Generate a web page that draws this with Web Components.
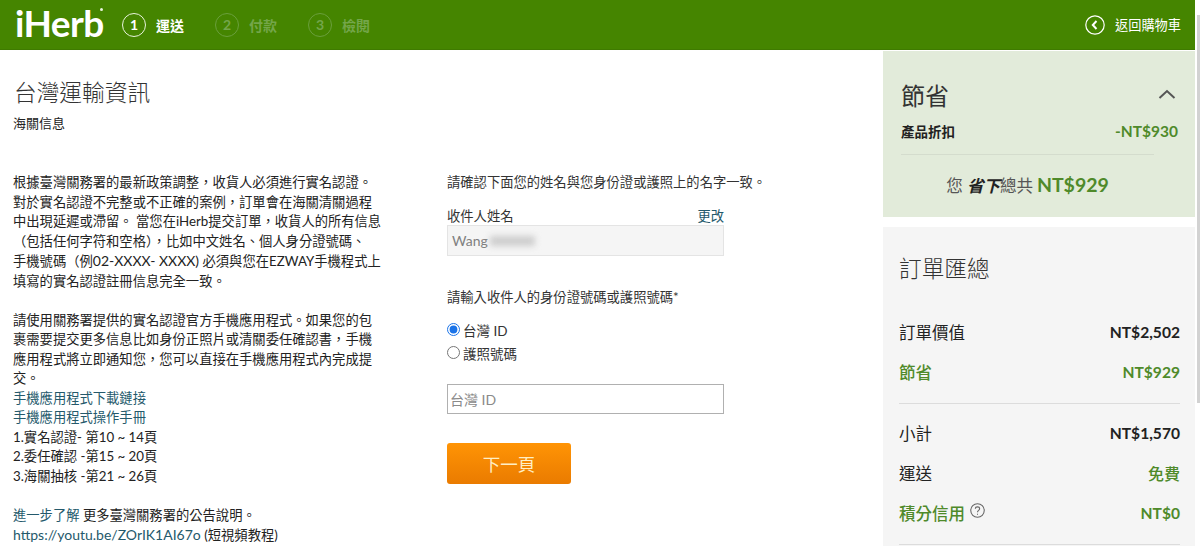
<!DOCTYPE html>
<html lang="zh-Hant">
<head>
<meta charset="utf-8">
<title>iHerb</title>
<style>
html, body { margin: 0; height: 100%; overflow: hidden; background: #fff; }
body {
    font-family: Lato, "Noto Sans CJK TC", sans-serif;
    font-weight: 300;
    color: #222;
}
</style>
</head>
<body>
<checkout-page>
    <checkout-header slot="header"></checkout-header>
    <customs-notice slot="notice"></customs-notice>
    <recipient-form slot="form"></recipient-form>
    <savings-panel slot="side"></savings-panel>
    <order-summary slot="side"></order-summary>
</checkout-page>

<script>
class CheckoutPage extends HTMLElement {
    constructor() {
        super();
        this.attachShadow({ mode: 'open' });
        this.shadowRoot.innerHTML = `
        <style>
        :host { display: flex; height: 546px; overflow: hidden; }
        .page { flex: 1; min-width: 0; }
        .columns { display: flex; height: 495px; }
        .main { width: 883px; display: flex; flex-shrink: 0; }
        .side { width: 312px; display: flex; flex-direction: column; gap: 10px; flex-shrink: 0; }
        .scrollbar { width: 5px; flex-shrink: 0; background: #fff; padding-top: 15px; box-sizing: border-box; }
        .thumb { width: 3px; margin-left: 2px; height: 388px; background: #d2d2d2; }
        </style>
        <div class="page">
            <slot name="header"></slot>
            <div class="columns">
                <div class="main">
                    <slot name="notice"></slot>
                    <slot name="form"></slot>
                </div>
                <div class="side"><slot name="side"></slot></div>
            </div>
        </div>
        <div class="scrollbar"><div class="thumb"></div></div>`;
    }
}

class CheckoutStep extends HTMLElement {
    constructor() {
        super();
        this.attachShadow({ mode: 'open' });
        this.shadowRoot.innerHTML = `
        <style>
        :host { display: flex; align-items: center; gap: 10px; color: #74a64a; font-weight: 700; font-size: 14px; }
        :host([active]) { color: #fff; }
        .num {
            width: 22px; height: 22px; border-radius: 50%;
            border: 1px solid #6a9f3c;
            display: flex; align-items: center; justify-content: center;
            font-size: 14px;
        }
        :host([active]) .num { border: 1.5px solid #e8f3dc; }
        </style>
        <span class="num">${this.getAttribute('num')}</span>
        <slot></slot>`;
    }
}

class CheckoutHeader extends HTMLElement {
    constructor() {
        super();
        this.attachShadow({ mode: 'open' });
        this.shadowRoot.innerHTML = `
        <style>
        :host {
            display: flex; align-items: center; height: 50px;
            background: #458500; color: #fff; box-sizing: border-box;
            border-bottom: 1px solid #3f7a00; padding: 0 14px 0 15px;
            margin-bottom: 1px;
        }
        .logo { font: 700 37px/50px Lato, sans-serif; letter-spacing: -0.6px; width: 107px; position: relative; top: -2px; }
        .logo i { position: absolute; left: 85px; top: 10px; width: 3px; height: 3px; border-radius: 50%; background: #e8f3dc; }
        .steps { display: flex; gap: 31px; }
        .back { margin-left: auto; display: flex; align-items: center; gap: 10px; font-size: 13.2px; font-weight: 400; }
        svg { display: block; }
        </style>
        <div class="logo">iHerb<i></i></div>
        <div class="steps">
            <checkout-step num="1" active>運送</checkout-step>
            <checkout-step num="2">付款</checkout-step>
            <checkout-step num="3">檢閱</checkout-step>
        </div>
        <div class="back">
            <svg width="20" height="20" viewBox="0 0 20 20" fill="none" stroke="#fff">
                <circle cx="10" cy="10" r="9.2" stroke-width="1.2"/>
                <path d="M11.5 6 L7.8 10 L11.5 14" stroke-width="2"/>
            </svg>
            <span>返回購物車</span>
        </div>`;
    }
}

class CustomsNotice extends HTMLElement {
    constructor() {
        super();
        this.attachShadow({ mode: 'open' });
        this.shadowRoot.innerHTML = `
        <style>
        :host { display: block; width: 447px; flex-shrink: 0; padding: 27px 0 0 13px; box-sizing: border-box; color: #222; }
        h1 { font-size: 22.7px; font-weight: 300; line-height: 30px; margin: 0 0 0 1px; color: #333; }
        h2 { font-size: 13px; font-weight: 400; line-height: 18px; margin: 6px 0 41px; }
        p { margin: 0 0 19.5px; font-size: 13.3px; line-height: 19.5px; font-weight: 400; white-space: nowrap; }
        a { color: #24596b; text-decoration: none; }
        .latin { font-size: 14px; }
        </style>
        <h1>台灣運輸資訊</h1>
        <h2>海關信息</h2>
        <p>根據臺灣關務署的最新政策調整，收貨人必須進行實名認證。<br>
        對於實名認證不完整或不正確的案例，訂單會在海關清關過程<br>
        中出現延遲或滯留。 當您在iHerb提交訂單，收貨人的所有信息<br>
        （包括任何字符和空格），比如中文姓名、個人身分證號碼、<br>
        手機號碼（例<span class="latin">02-XXXX- XXXX)</span> 必須與您在EZWAY手機程式上<br>
        填寫的實名認證註冊信息完全一致。</p>
        <p>請使用關務署提供的實名認證官方手機應用程式。如果您的包<br>
        裹需要提交更多信息比如身份正照片或清關委任確認書，手機<br>
        應用程式將立即通知您，您可以直接在手機應用程式內完成提<br>
        交。<br>
        <a href="#">手機應用程式下載鏈接</a><br>
        <a href="#">手機應用程式操作手冊</a><br>
        1.實名認證- 第10 ~ 14頁<br>
        2.委任確認 -第15 ~ 20頁<br>
        3.海關抽核 -第21 ~ 26頁</p>
        <p><a href="#">進一步了解</a> 更多臺灣關務署的公告說明。<br>
        <a class="latin" href="#">https://youtu.be/ZOrIK1AI67o</a> (短視頻教程)</p>`;
    }
}

class RecipientForm extends HTMLElement {
    constructor() {
        super();
        this.attachShadow({ mode: 'open' });
        this.shadowRoot.innerHTML = `
        <style>
        :host { display: block; width: 277px; flex-shrink: 0; padding-top: 121px; font-size: 13.3px; font-weight: 400; color: #333; }
        .line { line-height: 20px; white-space: nowrap; }
        .label-row { display: flex; justify-content: space-between; line-height: 20px; margin-top: 14px; }
        .label-row a { color: #24596b; text-decoration: none; }
        .readonly {
            height: 31px; box-sizing: border-box; margin-top: -1px;
            background: #f5f5f5; border: 1px solid #e4e4e4;
            display: flex; align-items: center; padding-left: 4px;
            color: #808080; font-size: 14px;
        }
        .blur { width: 45px; height: 10px; margin-left: 2px; background: #cdcdcd; filter: blur(3px); }
        .ask { margin-top: 31px; }
        .radios { margin-top: 11px; display: flex; flex-direction: column; }
        label { display: flex; align-items: center; height: 23px; font-size: 13.5px; }
        input[type=radio] { width: 13px; height: 13px; margin: 0 3px 0 0; accent-color: #1a73e8; }
        .field {
            display: block; width: 100%; height: 30px; box-sizing: border-box;
            margin-top: 20px; border: 1px solid #b0b0b0; padding: 0 2px;
            font: 400 14px Lato, "Noto Sans CJK TC", sans-serif; outline: none;
        }
        .field::placeholder { color: #8a8a8a; opacity: 1; }
        button {
            display: block; width: 124px; height: 41px; margin-top: 29px;
            border: 0; border-radius: 3px;
            background: linear-gradient(#ff9405, #ea7b00);
            color: #ffeec4; font: 400 17.5px Lato, "Noto Sans CJK TC", sans-serif;
        }
        </style>
        <div class="line">請確認下面您的姓名與您身份證或護照上的名字一致。</div>
        <div class="label-row"><span>收件人姓名</span><a href="#">更改</a></div>
        <div class="readonly"><span>Wang</span><span class="blur"></span></div>
        <div class="line ask">請輸入收件人的身份證號碼或護照號碼*</div>
        <div class="radios">
            <label><input type="radio" name="id" checked>台灣 ID</label>
            <label><input type="radio" name="id">護照號碼</label>
        </div>
        <input class="field" placeholder="台灣 ID">
        <button>下一頁</button>`;
    }
}

class SavingsPanel extends HTMLElement {
    constructor() {
        super();
        this.attachShadow({ mode: 'open' });
        this.shadowRoot.innerHTML = `
        <style>
        :host { display: block; height: 166px; box-sizing: border-box; background: #e2ebda; padding: 25px 17px 0 18px; flex-shrink: 0; }
        .head { display: flex; justify-content: space-between; align-items: center; height: 36px; }
        h3 { margin: 0; font-size: 24px; font-weight: 400; color: #333; }
        svg { display: block; margin-right: 2px; }
        .row { display: flex; justify-content: space-between; align-items: center; margin-top: 6px; height: 26px; }
        .row span:first-child { font-size: 13.5px; font-weight: 700; color: #222; }
        .row span:last-child { font-size: 15.5px; font-weight: 700; color: #4f8a2a; }
        hr { border: 0; border-top: 1px solid #d4dccd; margin: 10px 24px 0 0; }
        .total { display: flex; justify-content: center; align-items: baseline; margin: 15px 0 0 -24px; font-size: 16.5px; font-weight: 400; color: #555; line-height: 30px; white-space: pre; }
        em { color: #222; font-weight: 700; }
        b { font-size: 19.5px; color: #4f8a2a; margin-left: 4px; }
        </style>
        <div class="head">
            <h3>節省</h3>
            <svg width="18" height="10" viewBox="0 0 18 10" fill="none" stroke="#555" stroke-width="2"><path d="M1.5 9 L9 2 L16.5 9"/></svg>
        </div>
        <div class="row"><span>產品折扣</span><span>-NT$930</span></div>
        <hr>
        <div class="total"><span>您 </span><em>省下</em><span>總共</span><b>NT$929</b></div>`;
    }
}

class SummaryRow extends HTMLElement {
    constructor() {
        super();
        this.attachShadow({ mode: 'open' });
        this.shadowRoot.innerHTML = `
        <style>
        :host { display: flex; justify-content: space-between; align-items: center; height: 40px; font-size: 16.5px; font-weight: 400; color: #222; }
        :host([green]) { color: #4f8a2a; font-weight: 500; }
        .value { font-size: 15.6px; font-weight: 700; }
        .value.free { color: #4f8a2a; font-size: 16px; font-weight: 500; }
        </style>
        <span><slot></slot></span>
        <span class="value${this.hasAttribute('free') ? ' free' : ''}">${this.getAttribute('value')}</span>`;
    }
}

class OrderSummary extends HTMLElement {
    constructor() {
        super();
        this.attachShadow({ mode: 'open' });
        this.shadowRoot.innerHTML = `
        <style>
        :host { display: block; background: #f5f5f5; padding: 27px 15px 0 16px; flex: 1; min-height: 0; }
        h3 { margin: 0 0 28px; font-size: 22.7px; font-weight: 300; line-height: 30px; color: #333; }
        hr { border: 0; border-top: 1px solid #dcdcdc; margin: 11px 0 9px; }
        svg { vertical-align: 2px; margin-left: 1px; }
        </style>
        <h3>訂單匯總</h3>
        <summary-row value="NT$2,502">訂單價值</summary-row>
        <summary-row value="NT$929" green>節省</summary-row>
        <hr>
        <summary-row value="NT$1,570">小計</summary-row>
        <summary-row value="免費" free>運送</summary-row>
        <summary-row value="NT$0" green>積分信用 <svg width="15" height="15" viewBox="0 0 14 14" fill="none" stroke="#666"><circle cx="7" cy="7" r="6.3"/><path d="M5 5.4 C5 3 9 3 9 5.4 C9 7 7 6.8 7 8.6"/><path d="M7 10 V11"/></svg></summary-row>
        <hr>`;
    }
}

customElements.define('checkout-step', CheckoutStep);
customElements.define('checkout-header', CheckoutHeader);
customElements.define('customs-notice', CustomsNotice);
customElements.define('recipient-form', RecipientForm);
customElements.define('savings-panel', SavingsPanel);
customElements.define('summary-row', SummaryRow);
customElements.define('order-summary', OrderSummary);
customElements.define('checkout-page', CheckoutPage);
</script>
</body>
</html>
